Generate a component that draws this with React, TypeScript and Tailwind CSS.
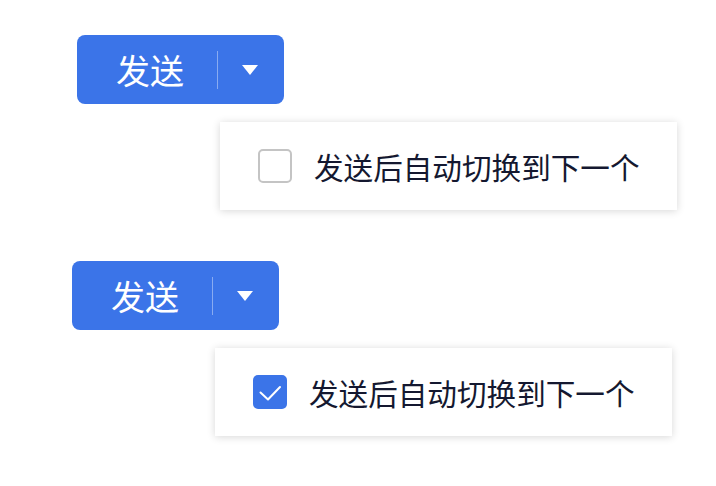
import React from 'react';

const font = { fontFamily: '"Noto Sans CJK SC", "Noto Sans", sans-serif' };

const SplitButton: React.FC = () => (
  <div className="flex items-center w-[207px] h-[69px] rounded-[8px] bg-[#3b74e8] pl-[39px] text-white">
    <span className="text-[34px] leading-none w-[68px]">发送</span>
    <span className="ml-[33px] w-px h-[38px] bg-white/40" />
    <svg className="ml-[24px]" width="16" height="10" viewBox="0 0 16 10">
      <polygon points="0,0 16,0 8,10" fill="white" />
    </svg>
  </div>
);

const Option: React.FC<{ checked: boolean }> = ({ checked }) => (
  <div className="flex items-center w-[457px] h-[88px] bg-white pl-[38px] shadow-[0_1px_8px_rgba(0,0,0,0.16)]">
    {checked ? (
      <span className="flex items-center justify-center w-[34px] h-[34px] rounded-[5px] bg-[#3b74e8]">
        <svg width="34" height="34" viewBox="0 0 34 34">
          <polyline points="7.5,17.5 15,24.5 27,12" fill="none" stroke="white" strokeWidth="2" strokeLinecap="round" strokeLinejoin="round" />
        </svg>
      </span>
    ) : (
      <span className="w-[34px] h-[34px] rounded-[5px] border-2 border-[#c4c4c4] bg-white" />
    )}
    <span className="ml-[22px] mt-[2px] text-[29.6px] leading-none text-[#141830]">发送后自动切换到下一个</span>
  </div>
);

export default function App() {
  return (
    <div className="w-[716px] h-[486px] bg-white flex flex-col" style={font}>
      <div className="ml-[77px] mt-[35px]">
        <SplitButton />
      </div>
      <div className="ml-[220px] mt-[18px]">
        <Option checked={false} />
      </div>
      <div className="ml-[72px] mt-[51px]">
        <SplitButton />
      </div>
      <div className="ml-[215px] mt-[18px]">
        <Option checked={true} />
      </div>
    </div>
  );
}
